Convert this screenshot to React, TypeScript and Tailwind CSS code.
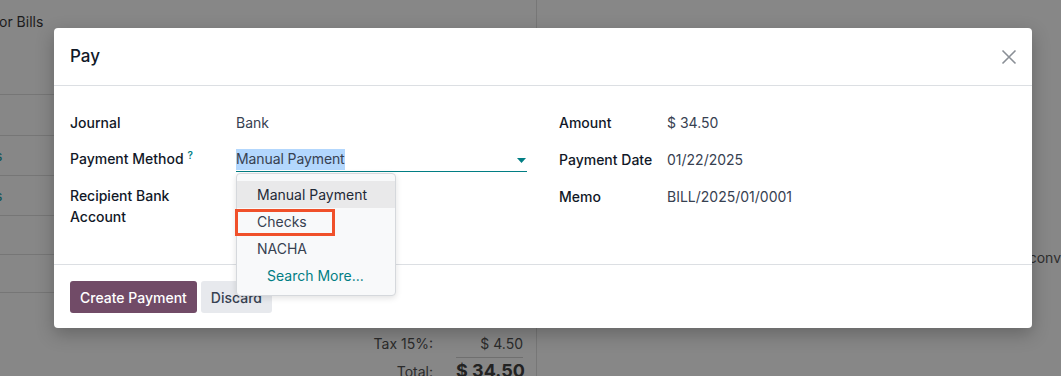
import React from "react";

function Row({ children, className = "" }: { children?: React.ReactNode; className?: string }) {
  return <div className={"shrink-0 border-b border-[#767676] " + className}>{children}</div>;
}

export default function App() {
  return (
    <div
      className="relative w-[1061px] h-[376px] overflow-hidden bg-[#878787] text-[14px]"
      style={{ fontFamily: "Inter, 'Noto Sans', sans-serif" }}
    >
      {/* background page (dimmed) */}
      <div className="flex h-full">
        <div className="w-[541px] h-full border-r border-[#777] flex flex-col">
          <div className="shrink-0 h-[45px] pt-[12px] text-[14px] text-[#1c1c1c] leading-[20px] -ml-[1px]">or Bills</div>
          <Row className="h-[50px]" />
          <Row className="h-[41px]" />
          <Row className="h-[40px] flex items-center">
            <span className="-ml-[5px] text-[#0d5356]">s</span>
          </Row>
          <Row className="h-[40px] flex items-center">
            <span className="-ml-[5px] text-[#0d5356]">s</span>
          </Row>
          <Row className="h-[39px]" />
          <Row className="h-[38px]" />
          <div className="shrink-0 mt-[40px] ml-[330px] grid grid-cols-[103px_23px_67px] text-[#2b2b2b] whitespace-nowrap">
            <span className="text-right leading-[22px]">Tax 15%:</span>
            <span />
            <span className="text-right leading-[22px] border-b border-[#6f6f6f] pb-[2px]">$ 4.50</span>
            <span className="text-right leading-[26px] pt-[1px]">Total:</span>
            <span />
            <span className="text-right font-bold text-[18px] text-[#222] leading-[26px]">$ 34.50</span>
          </div>
        </div>
        <div className="flex-1 relative">
          <div className="pt-[247px] pl-[492px] text-[#2e2e2e] whitespace-nowrap">conv</div>
        </div>
      </div>

      {/* modal */}
      <div className="absolute left-[54px] top-[28px] w-[978px] h-[300px] bg-white rounded-[4px] shadow-[0_6px_18px_rgba(0,0,0,0.25)] flex flex-col">
        <div className="h-[58px] border-b border-[#dcdfe3] flex items-center justify-between pl-[16px] pr-[15px]">
          <span className="text-[17px] font-medium text-[#111827]">Pay</span>
          <svg width="16" height="16" viewBox="0 0 16 16" className="text-[#8a8f96]">
            <path d="M1.5 1.5 L14.5 14.5 M14.5 1.5 L1.5 14.5" stroke="currentColor" strokeWidth="1.6" fill="none" />
          </svg>
        </div>

        <div className="flex-1 border-b border-[#dcdfe3] relative px-[16px] pt-[25px] flex">
          <div className="w-[457px] flex flex-col">
            <div className="flex h-[37px] items-start pt-[1px]">
              <span className="w-[166px] font-medium text-[#111827]">Journal</span>
              <span className="text-[#374151]">Bank</span>
            </div>
            <div className="flex h-[37px] items-start">
              <span className="w-[166px] font-medium text-[#111827]">
                Payment Method
                <sup className="text-[#017e84] text-[10px] ml-[4px] font-semibold">?</sup>
              </span>
              <div className="flex-1 border-b border-[#017e84] h-[24px] flex items-start justify-between">
                <span className="bg-[#b3d7fd] text-[#374151] leading-[20px] h-[21px] mt-[1px] px-0 tracking-[-0.1px]">Manual Payment</span>
                <svg width="9" height="5" viewBox="0 0 9 5" className="mt-[10px] mr-[1px]">
                  <path d="M0 0 H9 L4.5 5 Z" fill="#017e84" />
                </svg>
              </div>
            </div>
            <div className="flex items-start">
              <span className="w-[166px] font-medium text-[#111827] leading-[21px]">
                Recipient Bank
                <br />
                Account
              </span>
            </div>
          </div>
          <div className="ml-[32px] flex flex-col">
            <div className="flex h-[37px] items-start pt-[1px]">
              <span className="w-[108px] font-medium text-[#111827]">Amount</span>
              <span className="text-[#374151]">$ 34.50</span>
            </div>
            <div className="flex h-[37px] items-start pt-[1px]">
              <span className="w-[108px] font-medium text-[#111827]">Payment Date</span>
              <span className="text-[#374151]">01/22/2025</span>
            </div>
            <div className="flex h-[37px] items-start pt-[1px]">
              <span className="w-[108px] font-medium text-[#111827]">Memo</span>
              <span className="text-[#374151]">BILL/2025/01/0001</span>
            </div>
          </div>
        </div>

        <div className="h-[63px] flex items-start pt-[16px] pl-[16px] gap-[4px]">
          <button className="h-[32px] px-[10px] rounded-[3px] bg-[#714b67] text-white font-medium">Create Payment</button>
          <button className="h-[32px] px-[10px] rounded-[3px] bg-[#e7e9ed] text-[#374151] font-medium">Discard</button>
        </div>

        {/* dropdown */}
        <div className="absolute left-[182px] top-[145px] w-[160px] bg-[#f8f9fa] border border-[#d5d8dc] rounded-[4px] shadow-[0_2px_6px_rgba(0,0,0,0.12)] pt-[7px] pb-[6px] text-[#374151]">
          <div className="h-[27px] bg-[#e9e9ea] flex items-center pl-[20px] text-[#1f2937]">Manual Payment</div>
          <div className="h-[27px] flex items-center pl-[20px]">Checks</div>
          <div className="h-[27px] flex items-center pl-[20px]">NACHA</div>
          <div className="h-[27px] flex items-center pl-[30px] text-[#017e84]">Search More...</div>
        </div>
        {/* red highlight */}
        <div className="absolute left-[181px] top-[181px] w-[100px] h-[27px] border-[3px] border-[#f0502a]" />
      </div>
    </div>
  );
}
